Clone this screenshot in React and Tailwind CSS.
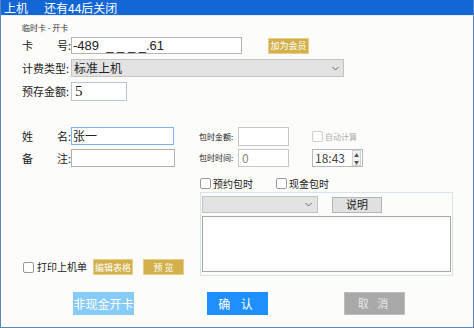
import React from "react";

const Check = ({ disabled }) => (
  <span
    className={
      "inline-block w-[11px] h-[11px] border rounded-[2px] bg-white shrink-0 " +
      (disabled ? "border-[#cfcfcf]" : "border-[#9a9a9a]")
    }
  />
);

const Label = ({ a, b }) => (
  <div className="w-[49px] shrink-0 flex justify-between text-[11px] leading-none text-[#222] whitespace-nowrap">
    <span>{a}</span>
    <span>{b}</span>
  </div>
);

const GoldButton = ({ children, w }) => (
  <div
    className={
      "h-[16px] shrink-0 bg-[#d3b04b] border border-[#e6cf8a] text-white text-[9px] leading-none flex items-center justify-center whitespace-nowrap " +
      w
    }
  >
    {children}
  </div>
);

const Chevron = () => (
  <svg width="7" height="5" viewBox="0 0 7 5" className="shrink-0">
    <path d="M0.5 1 L3.5 4 L6.5 1" fill="none" stroke="#666" strokeWidth="1" />
  </svg>
);

export default function App() {
  return (
    <div className="w-[474px] h-[328px] flex flex-col bg-[#fcfcfa] border-l border-r border-b border-[#5a86c0] font-['Microsoft_YaHei','Noto_Sans_CJK_SC',sans-serif] text-[#222] overflow-hidden">
      {/* ---------- title bar ---------- */}
      <div className="h-[16px] shrink-0 bg-[#1366d6] flex items-center text-white text-[12px] leading-[16px] border-b border-[#e8eef8] whitespace-nowrap">
        <span className="ml-[3px]">上机</span>
        <span className="ml-[16px]">还有44后关闭</span>
      </div>

      <div className="pl-[21px] flex flex-col">
        <div className="mt-[7px] text-[8px] leading-[9px] text-[#333]">临时卡 - 开卡</div>

        {/* ---------- card no ---------- */}
        <div className="mt-[5px] h-[17px] flex items-center">
          <Label a="卡" b="号:" />
          <div className="w-[171px] h-[17px] border border-[#b4b4b4] bg-white flex items-center pl-[1px] text-[13px] leading-none whitespace-pre font-['Liberation_Sans',sans-serif]">
            -489  _ _ _ _.61
          </div>
          <GoldButton w="ml-[26px] w-[41px]">加为会员</GoldButton>
        </div>

        {/* ---------- billing type ---------- */}
        <div className="mt-[5px] h-[18px] flex items-center">
          <div className="w-[49px] shrink-0 text-[11px] leading-none whitespace-nowrap">计费类型:</div>
          <div className="w-[273px] h-[18px] border border-[#c3c3c3] bg-[#e3e3e3] flex items-center justify-between pl-[2px] pr-[4px] text-[12px] leading-none">
            <span>标准上机</span>
            <Chevron />
          </div>
        </div>

        {/* ---------- deposit ---------- */}
        <div className="mt-[5px] h-[19px] flex items-center">
          <div className="w-[49px] shrink-0 text-[11px] leading-none whitespace-nowrap">预存金额:</div>
          <div className="w-[56px] h-[19px] border border-[#b8c4d0] bg-white flex items-end pl-[3px] text-[15px] leading-[17px] font-['Liberation_Serif',serif]">
            5
          </div>
        </div>

        {/* ---------- middle section ---------- */}
        <div className="mt-[26px] flex">
          {/* left column */}
          <div className="w-[177px] shrink-0 flex flex-col">
            <div className="h-[18px] flex items-center">
              <Label a="姓" b="名:" />
              <div className="w-[103px] h-[18px] border border-[#7eb4ea] bg-white flex items-center pl-[1px] text-[12px] leading-none">
                张一
              </div>
            </div>
            <div className="mt-[4px] h-[18px] flex items-center">
              <Label a="备" b="注:" />
              <div className="w-[104px] h-[18px] border border-[#b0b0b0] bg-white" />
            </div>
            <div className="flex-1" />
            <div className="mb-[1px] h-[16px] flex items-center">
              <span className="ml-[1px] flex">
                <Check />
              </span>
              <span className="ml-[3px] text-[10px] leading-none whitespace-nowrap">打印上机单</span>
              <GoldButton w="ml-[6px] w-[40px]">编辑表格</GoldButton>
              <GoldButton w="ml-[10px] w-[41px]">预 览</GoldButton>
            </div>
          </div>

          {/* right column */}
          <div className="flex flex-col">
            <div className="h-[19px] flex items-center">
              <div className="w-[39px] shrink-0 text-[8px] leading-none whitespace-nowrap">包时金额:</div>
              <div className="w-[51px] h-[19px] border border-[#c8c8c8] bg-white" />
              <div className="ml-[23px] flex items-center gap-[2px]">
                <Check disabled />
                <span className="text-[8px] leading-none text-[#b0b0b0] whitespace-nowrap">自动计算</span>
              </div>
            </div>
            <div className="mt-[3px] h-[18px] flex items-center">
              <div className="w-[39px] shrink-0 text-[8px] leading-none whitespace-nowrap">包时时间:</div>
              <div className="w-[51px] h-[18px] border border-[#c8c8c8] bg-white flex items-center pl-[3px] text-[12px] leading-none text-[#888]">
                0
              </div>
              <div className="ml-[23px] w-[51px] h-[18px] border border-[#b8b8b8] bg-white flex items-center justify-between pl-[2px] text-[12px] leading-none text-[#444]">
                <span>18:43</span>
                <div className="w-[9px] h-[16px] mr-[1px] flex flex-col border border-[#d0d0d0] bg-[#f4f4f4]">
                  <div className="flex-1 flex items-center justify-center text-[5px] leading-none text-[#555]">▲</div>
                  <div className="flex-1 flex items-center justify-center text-[5px] leading-none text-[#555]">▼</div>
                </div>
              </div>
            </div>

            <div className="mt-[11px] h-[11px] flex items-center">
              <span className="ml-[1px] flex">
                <Check />
              </span>
              <span className="ml-[2px] w-[40px] text-[10px] leading-none whitespace-nowrap">预约包时</span>
              <span className="ml-[23px] flex">
                <Check />
              </span>
              <span className="ml-[2px] text-[10px] leading-none whitespace-nowrap">现金包时</span>
            </div>

            {/* group box */}
            <div className="mt-[3px] ml-[1px] w-[253px] h-[84px] border border-[#d8e2ec] flex flex-col pl-[1px] pt-[3px]">
              <div className="flex items-center">
                <div className="w-[116px] h-[17px] border border-[#c3c3c3] bg-[#e3e3e3] flex items-center justify-end pr-[5px]">
                  <Chevron />
                </div>
                <div className="ml-[14px] w-[50px] h-[16px] border border-[#b5b5b5] bg-[#e1e1e1] flex items-center justify-center text-[11px] leading-none">
                  说明
                </div>
              </div>
              <div className="mt-[3px] w-[249px] h-[56px] border border-[#a8a8a8] bg-white" />
            </div>
          </div>
        </div>

        {/* ---------- bottom buttons ---------- */}
        <div className="mt-[16px] flex">
          <div className="ml-[51px] w-[61px] h-[23px] bg-[#87cbfa] text-white text-[12px] leading-none flex items-center justify-center whitespace-nowrap">
            非现金开卡
          </div>
          <div className="ml-[73px] w-[61px] h-[23px] bg-[#1e8ffd] text-white text-[12px] leading-none flex items-center justify-center tracking-[4px]">
            确 认
          </div>
          <div className="ml-[76px] w-[61px] h-[23px] bg-[#a9a9a9] border border-[#bdbdbd] text-[#e8e8e8] text-[11px] leading-none flex items-center justify-center tracking-[3px]">
            取 消
          </div>
        </div>
      </div>
    </div>
  );
}
